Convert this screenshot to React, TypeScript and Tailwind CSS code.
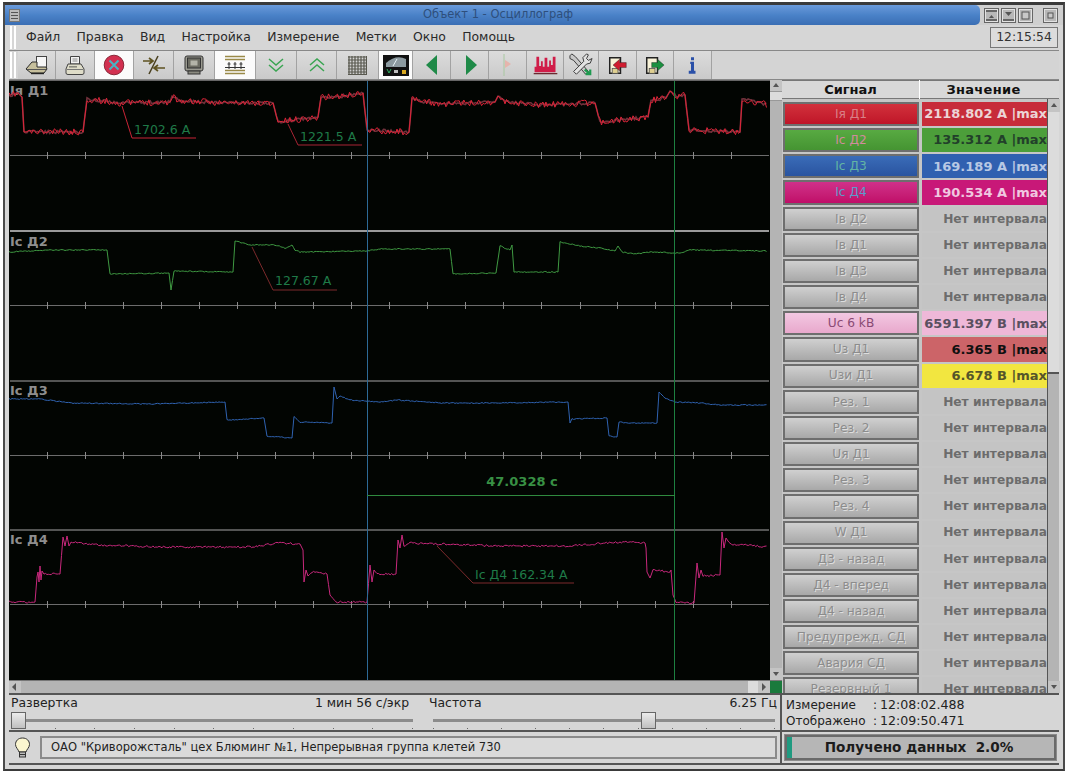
const sans = "font-['DejaVu_Sans',sans-serif]";

type Pt = [number, number];

/* =========================
   SIGNAL DATA
========================= */

const RED: Pt[] = [
  [9, 96], [18, 93], [22, 97], [24, 132], [83, 132], [87, 99], [120, 103], [170, 102], [172, 96], [180, 101], [230, 103],
  [273, 103], [278, 122], [318, 117], [321, 97], [345, 96], [363, 93], [367, 130], [409, 132], [412, 100], [440, 104],
  [495, 102], [498, 96], [505, 102], [540, 105], [595, 103], [600, 122], [648, 117], [651, 100], [666, 98], [670, 91],
  [676, 96], [685, 95], [689, 130], [740, 132], [742, 99], [768, 105],
];
const GREEN: Pt[] = [
  [9, 252], [50, 250], [107, 250], [110, 274], [169, 273], [171, 290], [174, 271], [233, 272], [235, 241], [250, 245],
  [275, 245], [285, 248], [292, 245], [295, 250], [300, 252], [366, 251], [380, 249], [450, 249], [453, 274], [496, 273],
  [500, 246], [510, 250], [512, 245], [514, 272], [558, 272], [560, 242], [580, 246], [600, 248], [615, 251], [618, 246],
  [622, 252], [635, 254], [650, 252], [680, 253], [690, 250], [768, 251],
];
const BLUE: Pt[] = [
  [9, 399], [40, 399], [70, 403], [150, 404], [225, 402], [227, 420], [264, 418], [267, 436], [292, 438], [294, 417],
  [300, 422], [332, 423], [334, 387], [337, 399], [340, 396], [350, 400], [366, 401], [380, 402], [397, 400], [440, 403],
  [500, 403], [568, 402], [570, 423], [572, 419], [607, 418], [609, 436], [617, 437], [619, 422], [630, 423], [657, 423],
  [659, 392], [665, 398], [675, 402], [700, 403], [720, 405], [768, 405],
];
const PINK: Pt[] = [
  [9, 602], [35, 602], [37, 577], [38, 572], [39, 582], [40, 566], [41, 580], [42, 571], [44, 574], [60, 574], [63, 537],
  [65, 546], [67, 536], [69, 546], [71, 542], [100, 545], [165, 547], [250, 547], [280, 543], [300, 544], [303, 550],
  [304, 582], [306, 570], [308, 576], [312, 572], [327, 574], [330, 595], [336, 602], [367, 602], [370, 565], [372, 582],
  [374, 570], [377, 574], [396, 574], [398, 540], [400, 548], [402, 535], [404, 546], [410, 543], [440, 544], [500, 546],
  [570, 546], [620, 542], [645, 543], [646, 548], [647, 572], [650, 578], [653, 570], [670, 572], [671, 570], [673, 595],
  [676, 602], [694, 603], [697, 563], [699, 578], [701, 570], [703, 576], [720, 575], [722, 532], [724, 548], [726, 538],
  [730, 544], [768, 547],
];

function makeTrace(pts: Pt[], amp: number, seed: number) {
  let s = seed;
  const rnd = () => {
    s = (s * 16807) % 2147483647;
    return s / 2147483647 - 0.5;
  };
  const out: string[] = [];
  for (let i = 0; i < pts.length - 1; i++) {
    const [x0, y0] = pts[i];
    const [x1, y1] = pts[i + 1];
    const n = Math.max(1, Math.round((x1 - x0) / 1.5));
    const flat = Math.abs(y1 - y0) / Math.max(1, x1 - x0) < 1;
    for (let k = 0; k < n; k++) {
      const t = k / n;
      const noise = flat ? rnd() * amp : 0;
      out.push(`${(x0 + (x1 - x0) * t).toFixed(1)},${(y0 + (y1 - y0) * t + noise).toFixed(1)}`);
    }
  }
  return out.join(" ");
}

const ticks = [47, 85, 123, 161, 199, 237, 275, 313, 351, 389, 427, 465, 503, 541, 580, 617, 655, 693, 731];

const signals = [
  { name: "Iя Д1", value: "2118.802 А |max", btn: "from-[#d2303c] to-[#bf1428] text-[#d98088]", cell: "bg-[#c72c3a] text-[#ecd4d6]" },
  { name: "Iс Д2", value: "135.312 А |max", btn: "from-[#58aa42] to-[#459432] text-[#cf8c9c]", cell: "bg-[#4c9e3a] text-[#22402a]" },
  { name: "Iс Д3", value: "169.189 А |max", btn: "from-[#3a6cb8] to-[#2a54a0] text-[#62b4a4]", cell: "bg-[#3060b0] text-[#b8c8e4]" },
  { name: "Iс Д4", value: "190.534 А |max", btn: "from-[#d0308a] to-[#c00c68] text-[#5c9ccc]", cell: "bg-[#c81878] text-[#f0c8e0]" },
  { name: "Iв Д2" },
  { name: "Iв Д1" },
  { name: "Iв Д3" },
  { name: "Iв Д4" },
  { name: "Uс 6 kВ", value: "6591.397 В |max", btn: "from-[#f2c8e2] to-[#e8a8cc] text-[#8a4a74]", cell: "bg-[#eeb8d8] text-[#5a5060]" },
  { name: "Uз Д1", value: "6.365 В |max", cell: "bg-[#cc6468] text-[#101010]" },
  { name: "Uзи Д1", value: "6.678 В |max", cell: "bg-[#f2e640] text-[#55552a]" },
  { name: "Рез. 1" },
  { name: "Рез. 2" },
  { name: "Uя Д1" },
  { name: "Рез. 3" },
  { name: "Рез. 4" },
  { name: "W Д1" },
  { name: "Д3 - назад" },
  { name: "Д4 - вперед" },
  { name: "Д4 - назад" },
  { name: "Предупрежд. СД" },
  { name: "Авария СД" },
  { name: "Резервный 1" },
];

const menu = ["Файл", "Правка", "Вид", "Настройка", "Измерение", "Метки", "Окно", "Помощь"];

export default function App() {
  return (
    <div className={`h-[776px] w-[1070px] overflow-hidden bg-white pl-[3px] pt-[2px] text-[12px] text-[#222] ${sans}`}>
      <div className="flex h-[769px] w-[1062px] flex-col border-x-2 border-t-[3px] border-b-2 border-x-[#4a4a4a] border-t-[#3a3a3a] border-b-[#3a3a3a] bg-[#d6d6d6]">
        <TitleBar />

        <div className="flex min-h-0 flex-1 flex-col px-[4px]">
          {/* Menu */}
          <div className="flex h-[25px] items-center">
            <Handle />
            <div className="ml-[8px] flex gap-[16.3px] text-[12.4px] text-[#2a2a2a]">
              {menu.map((m) => (
                <span key={m}>{m}</span>
              ))}
            </div>
            <div className="ml-auto mr-[1px] flex h-[21px] w-[68px] items-center justify-center border border-[#777] bg-[#dcdcdc] text-[12.4px] text-[#333]">
              12:15:54
            </div>
          </div>

          <Toolbar />

          {/* Plot + table */}
          <div className="flex h-[613px]">
            <div className="flex w-[773px] flex-col">
              <div className="flex h-[600px]">
                <Plot />
                <VScroll />
              </div>
              <HScroll />
            </div>
            <SignalTable />
          </div>

          {/* Sliders + times */}
          <div className="flex h-[37px] border-t-2 border-[#555]">
            <div className="flex w-[773px] gap-[14px] border-r-2 border-[#555] pl-[2px] pr-[2px]">
              <Slider label="Развертка" value="1 мин 56 с/экр" width="w-[404px]" valuePad="pr-[6px]" thumb="left-0" />
              <Slider label="Частота" value="6.25 Гц" width="w-[348px]" valuePad="pr-0" thumb="left-[212px]" />
            </div>
            <div className="flex flex-1 flex-col justify-center pl-[4px] leading-[16px] text-[#222]">
              <div className="flex">
                <span className="w-[87px]">Измерение</span>
                <span className="w-[7px]">:</span>
                <span className="text-[12.6px]">12:08:02.488</span>
              </div>
              <div className="flex">
                <span className="w-[87px]">Отображено</span>
                <span className="w-[7px]">:</span>
                <span className="text-[12.6px]">12:09:50.471</span>
              </div>
            </div>
          </div>

          {/* Status */}
          <div className="flex h-[35px] border-y-2 border-[#555]">
            <div className="flex w-[773px] items-center border-r-2 border-[#555] pl-[5px]">
              <Bulb />
              <div className="ml-[9px] flex h-[23px] w-[737px] items-center border-2 border-[#8a8a8a] bg-[#dadada] pl-[9px] text-[11.5px] text-[#222]">
                ОАО "Криворожсталь" цех Блюминг №1, Непрерывная группа клетей 730
              </div>
            </div>
            <div className="flex flex-1 items-center pl-[3px]">
              <div className="relative flex h-[25px] w-[271px] items-center justify-center border-2 border-[#6a6a6a] bg-[#b6b6b6] pr-[3px] text-[13.6px] font-bold text-[#1c1c1c] outline outline-[#8a8a8a]">
                <div className="absolute bottom-0 left-0 top-0 w-[5px] bg-[#1f9a80]" />
                <span className="whitespace-pre">Получено данных  2.0%</span>
              </div>
            </div>
          </div>
        </div>
      </div>
    </div>
  );
}

/* =========================
   TITLE BAR
========================= */

function TitleBar() {
  return (
    <div className="flex h-[20px] bg-[#cfcfcf]">
      <div className="flex w-[975px] items-center rounded-r-[5px] bg-linear-to-b from-[#6a9ada] via-[#4a82c8] to-[#3a6eb4] pl-[4px]">
        <div className="flex h-[13px] w-[11px] flex-col justify-center gap-[2px] border border-[#777] bg-[#bcbcbc] px-[1px]">
          <div className="h-px bg-[#555]" />
          <div className="h-px bg-[#555]" />
          <div className="h-px bg-[#555]" />
        </div>
        <span className="ml-[403px] text-[11.5px] text-[#2e4f7c]">Объект 1 - Осциллограф</span>
      </div>
      <div className="ml-[4px] flex items-center gap-[2px]">
        <WinBtn kind="up" />
        <WinBtn kind="down" />
        <WinBtn kind="box" />
      </div>
      <div className="ml-[10px] flex items-center">
        <WinBtn kind="close" />
      </div>
    </div>
  );
}

function WinBtn({ kind }: { kind: "up" | "down" | "box" | "close" }) {
  return (
    <svg width="15" height="15" viewBox="0 0 15 15">
      <rect x="0.5" y="0.5" width="14" height="14" fill="#b8b8b8" stroke="#666" />
      <rect x="1.5" y="1.5" width="12" height="12" fill="none" stroke="#e2e2e2" />
      {kind === "up" && (
        <>
          <rect x="2" y="2" width="11" height="2" fill="#666" />
          <path d="M5 10 L7.5 7 L10 10 Z" fill="#555" />
          <rect x="2" y="11" width="11" height="2" fill="#666" />
        </>
      )}
      {kind === "down" && (
        <>
          <path d="M4 4 H11 L7.5 8 Z" fill="#555" />
          <rect x="2" y="11" width="11" height="2" fill="#666" />
        </>
      )}
      {kind === "box" && <rect x="4" y="4" width="7" height="7" fill="#c8c8c8" stroke="#555" />}
      {kind === "close" && <rect x="5" y="5" width="5" height="5" fill="#c8c8c8" stroke="#555" />}
    </svg>
  );
}

function Handle() {
  return (
    <div className="flex h-full w-[9px] gap-[2px] py-[1px] pl-[1px]">
      <div className="w-[2px] border-x border-x-[#fff] bg-[#999]" />
      <div className="w-[2px] border-x border-x-[#fff] bg-[#999]" />
    </div>
  );
}

/* =========================
   TOOLBAR
========================= */

function ToolBtn({ w, on, children }: { w: string; on?: boolean; children: React.ReactNode }) {
  return (
    <div
      className={`flex h-full items-center justify-center border-r border-[#a2a2a2] ${w} ${
        on ? "bg-[#fbfbfb]" : "bg-linear-to-b from-[#dcdcdc] to-[#cacaca]"
      }`}
    >
      {children}
    </div>
  );
}

function Toolbar() {
  return (
    <div className="flex h-[30px] border-y border-[#888] bg-[#d4d4d4]">
      <Handle />
      <ToolBtn w="w-[38px]"><ScannerIcon /></ToolBtn>
      <ToolBtn w="w-[39px]"><PrinterIcon /></ToolBtn>
      <ToolBtn w="w-[39px]" on><StopIcon /></ToolBtn>
      <ToolBtn w="w-[40px]"><SwapIcon /></ToolBtn>
      <ToolBtn w="w-[41px]"><MonitorIcon /></ToolBtn>
      <ToolBtn w="w-[41px]" on><LinesIcon /></ToolBtn>
      <ToolBtn w="w-[41px]"><ChevronsIcon d="M1 1 L8 7 L15 1 M1 7 L8 13 L15 7" /></ToolBtn>
      <ToolBtn w="w-[40px]"><ChevronsIcon d="M1 7 L8 1 L15 7 M1 13 L8 7 L15 13" /></ToolBtn>
      <ToolBtn w="w-[42px]"><GridIcon /></ToolBtn>
      <ToolBtn w="w-[34px]" on><GaugeIcon /></ToolBtn>
      <ToolBtn w="w-[38px]"><TriIcon d="M13 3 L13 23 L2 13 Z" /></ToolBtn>
      <ToolBtn w="w-[38px]"><TriIcon d="M4 3 L15 13 L4 23 Z" /></ToolBtn>
      <ToolBtn w="w-[38px]"><FlagIcon /></ToolBtn>
      <ToolBtn w="w-[37px]"><BarsIcon /></ToolBtn>
      <ToolBtn w="w-[35px]"><ToolsIcon /></ToolBtn>
      <ToolBtn w="w-[38px]"><DocIcon arrow="#d01c30" dir="left" /></ToolBtn>
      <ToolBtn w="w-[37px]"><DocIcon arrow="#1c9040" dir="right" /></ToolBtn>
      <ToolBtn w="w-[38px]"><InfoIcon /></ToolBtn>
      <div className="flex-1" />
    </div>
  );
}

function ScannerIcon() {
  return (
    <svg width="23" height="20" viewBox="0 0 23 20">
      <rect x="11.5" y="1.5" width="10" height="11" fill="#f6f6f6" stroke="#444" />
      <path d="M7 7 H12 V12 H21 L22 14 L19 18 H6 L1 14 Z" fill="#c6bf9c" stroke="#2a2a2a" />
      <path d="M2 14.5 H21" stroke="#555" />
      <path d="M6 18.5 H19" stroke="#222" strokeWidth="1.4" />
    </svg>
  );
}

function PrinterIcon() {
  return (
    <svg width="20" height="21" viewBox="0 0 20 21">
      <path d="M5.5 1.5 H14.5 V9 H5.5 Z" fill="#f2f2f2" stroke="#444" />
      <path d="M7.5 4 H12.5 M7.5 6 H12.5" stroke="#888" />
      <path d="M3 9 H16 L19 14 V18 Q19 19.5 17 19.5 H3 Q1 19.5 1 18 V14 Z" fill="#dedcc8" stroke="#444" />
      <path d="M2 14.5 H18" stroke="#777" />
      <rect x="4" y="11" width="8" height="1.6" fill="#8a8a80" />
    </svg>
  );
}

function StopIcon() {
  return (
    <svg width="22" height="22" viewBox="0 0 22 22">
      <circle cx="11" cy="11" r="9.8" fill="#d23050" stroke="#8a2838" />
      <path d="M6.5 6.5 L15.5 15.5 M15.5 6.5 L6.5 15.5" stroke="#48b4c4" strokeWidth="2" />
    </svg>
  );
}

function SwapIcon() {
  return (
    <svg width="24" height="20" viewBox="0 0 24 20">
      <path d="M16 1 L7 19" stroke="#4a4020" strokeWidth="1.5" />
      <path d="M1 6 H10 M7 3 L11 6 L7 9" stroke="#5e5220" strokeWidth="1.7" fill="none" />
      <path d="M23 13 H13 M16 10 L12 13 L16 16" stroke="#5e5220" strokeWidth="1.7" fill="none" />
    </svg>
  );
}

function MonitorIcon() {
  return (
    <svg width="20" height="21" viewBox="0 0 20 21">
      <rect x="1" y="1" width="18" height="15" rx="2" fill="#9a9a90" stroke="#333" />
      <rect x="3.5" y="3" width="13" height="10" fill="#6c6c62" stroke="#333" />
      <rect x="6.5" y="5.5" width="7" height="5" fill="#b4b4a8" />
      <rect x="4" y="16" width="12" height="3" fill="#8a8a80" stroke="#333" />
    </svg>
  );
}

function LinesIcon() {
  return (
    <svg width="22" height="21" viewBox="0 0 22 21">
      <path d="M1 1.5 H21 M1 4.5 H21 M1 15.5 H21 M1 18.5 H21" stroke="#9a8a48" strokeWidth="1.3" />
      <path d="M1 12.5 H21" stroke="#333" />
      <path d="M5 7 V14 M11 7 V14 M17 7 V14 M3.5 9 H6.5 M9.5 9 H12.5 M15.5 9 H18.5" stroke="#333" />
    </svg>
  );
}

function ChevronsIcon({ d }: { d: string }) {
  return (
    <svg width="16" height="14" viewBox="0 0 16 14">
      <path d={d} fill="none" stroke="#3aa552" strokeWidth="1.5" />
    </svg>
  );
}

function GridIcon() {
  return (
    <svg width="19" height="19" viewBox="0 0 19 19">
      <path
        d="M1 0 V19 M4 0 V19 M7 0 V19 M10 0 V19 M13 0 V19 M16 0 V19 M18.5 0 V19 M0 1 H19 M0 4 H19 M0 7 H19 M0 10 H19 M0 13 H19 M0 16 H19 M0 18.5 H19"
        stroke="#58584e"
        strokeWidth="1.2"
      />
    </svg>
  );
}

function GaugeIcon() {
  return (
    <svg width="26" height="21" viewBox="0 0 26 21">
      <rect width="26" height="21" fill="#111" />
      <path d="M3 8 Q13 -1 23 4 V12 H3 Z" fill="#8c9aa0" />
      <path d="M10 11 L14 4" stroke="#e8f4f8" />
      <rect x="11" y="15" width="4" height="3" fill="#bbb" />
      <path d="M4 14 L6 18 L8 14" stroke="#2fb060" fill="none" />
      <rect x="19" y="15" width="4" height="4" fill="#d8a820" />
    </svg>
  );
}

function TriIcon({ d }: { d: string }) {
  return (
    <svg width="16" height="26" viewBox="0 0 16 26">
      <path d={d} fill="#1f8a48" />
    </svg>
  );
}

function FlagIcon() {
  return (
    <svg width="14" height="22" viewBox="0 0 14 22">
      <path d="M3 0 V22" stroke="#a8c8a0" strokeWidth="1" />
      <path d="M4 6 L10 10 L4 14 Z" fill="#e6b4ac" />
    </svg>
  );
}

function BarsIcon() {
  return (
    <svg width="25" height="20" viewBox="0 0 26 22">
      <path d="M1 19 V13 H3 V2 H6 V12 H8 V7 H10 V13 H12 V3 H15 V13 H17 V6 H19 V11 H21 V2 H24 V19 Z" fill="#d01c48" />
      <path d="M0 20.5 H26" stroke="#6a2a30" strokeWidth="1.4" />
    </svg>
  );
}

function ToolsIcon() {
  return (
    <svg width="26" height="24" viewBox="0 0 28 26">
      <path d="M2 3 L4 1 L8 4 L22 20 L19 23 L6 8 L2 6 Z" fill="#c8c8c8" stroke="#333" />
      <path d="M20 1 L16 5 L17 9 L6 20 L9 23 L20 12 L24 11 L26 6 L22 8 L20 6 L22 2 Z" fill="#e2e2e2" stroke="#333" />
      <path d="M18 18 L24 23 M24 18 V23 H19" stroke="#1f9a50" strokeWidth="2.4" fill="none" />
    </svg>
  );
}

function DocIcon({ arrow, dir }: { arrow: string; dir: "left" | "right" }) {
  return (
    <svg width="20" height="19" viewBox="0 0 24 23">
      <path d="M2 2 H15 V21 H2 Z" fill="#f8f2d8" stroke="#222" strokeWidth="1.8" />
      <rect x="5" y="15" width="7" height="6" fill="#e0d090" stroke="#555" />
      {dir === "left" ? (
        <path d="M6 11 L14 4 V8 H22 V14 H14 V18 Z" fill={arrow} stroke="#222" strokeWidth="0.5" />
      ) : (
        <path d="M23 11 L15 4 V8 H8 V14 H15 V18 Z" fill={arrow} stroke="#222" strokeWidth="0.5" />
      )}
    </svg>
  );
}

function InfoIcon() {
  return (
    <svg width="9" height="19" viewBox="0 0 12 24">
      <rect x="4" y="1" width="4" height="4" fill="#2a50a8" />
      <path d="M3 7 H8 V19 H10 V23 H1 V19 H4 V10 H3 Z" fill="#2a50a8" />
    </svg>
  );
}

function Bulb() {
  return (
    <svg width="17" height="22" viewBox="0 0 17 22">
      <path
        d="M8.5 1 C4 1 1.5 4 1.5 7.5 C1.5 10.5 4.5 12.5 5 15 H12 C12.5 12.5 15.5 10.5 15.5 7.5 C15.5 4 13 1 8.5 1 Z"
        fill="#fbf6d0"
        stroke="#333"
      />
      <rect x="5.5" y="15" width="6" height="5" fill="#bbb" stroke="#333" />
      <path d="M6 17.5 H11" stroke="#333" />
    </svg>
  );
}

/* =========================
   PLOT
========================= */

function Plot() {
  return (
    <div className="w-[761px] border-t border-[#666] bg-[#020502]">
      <svg width="761" height="599" viewBox="9 81 761 599" className={`block ${sans}`}>
        {[155, 305, 455, 604].map((y) => (
          <g key={y} stroke="#6c6c6c">
            <path d={`M10 ${y}.5 H769`} />
            {ticks.map((x) => (
              <path key={x} d={`M${x}.5 ${y - 3} V${y + 4}`} stroke="#8a8a8a" />
            ))}
          </g>
        ))}
        <path d="M10 231 H769" stroke="#9a9a9a" strokeWidth="2" />
        <path d="M10 381 H769" stroke="#707070" strokeWidth="1.4" />
        <path d="M10 530 H769" stroke="#707070" strokeWidth="1.4" />

        <g fontSize="13" fontWeight="700" fill="#8e8e8e">
          <text x="10" y="95">Iя Д1</text>
          <text x="10" y="246">Iс Д2</text>
          <text x="10" y="395">Iс Д3</text>
          <text x="10" y="544">Iс Д4</text>
        </g>

        <polyline points={makeTrace(RED, 3, 29)} fill="none" stroke="#70303a" strokeWidth="1.6" />
        <polyline points={makeTrace(RED, 6.5, 11)} fill="none" stroke="#dc2438" strokeWidth="1" />
        <polyline points={makeTrace(GREEN, 1, 37)} fill="none" stroke="#3f9a42" strokeWidth="1" />
        <polyline points={makeTrace(BLUE, 1, 53)} fill="none" stroke="#2f62b0" strokeWidth="1" />
        <polyline points={makeTrace(PINK, 2, 71)} fill="none" stroke="#c8287c" strokeWidth="1" />

        <path d="M367.5 81 V680" stroke="#2d6a96" />
        <path d="M674.5 81 V680" stroke="#1d8040" />
        <path d="M367 495.5 H675" stroke="#2f8a3e" />
        <text x="522" y="486" textAnchor="middle" fontSize="13" fontWeight="700" fill="#389044">47.0328 с</text>

        <path d="M122 106 L132 138 H196" fill="none" stroke="#c92436" />
        <path d="M288 124 L298 145 H362" fill="none" stroke="#a82434" />
        <path d="M252 247 L273 290 H337" fill="none" stroke="#7c2a2c" />
        <path d="M437 546 L473 583 H574" fill="none" stroke="#7c2a2c" />
        <g fontSize="12.5" fill="#1f7a48">
          <text x="134" y="134">1702.6 А</text>
          <text x="300" y="141">1221.5 А</text>
          <text x="275" y="285">127.67 А</text>
          <text x="475" y="579">Iс Д4 162.34 А</text>
        </g>
      </svg>
    </div>
  );
}

function ArrowBtn({ dir, h }: { dir: "up" | "down" | "left" | "right"; h: string }) {
  const d = {
    up: "M3 7 L6 3 L9 7 Z",
    down: "M3 4 L6 8 L9 4 Z",
    left: "M7 2 L3 6 L7 10 Z",
    right: "M4 2 L8 6 L4 10 Z",
  }[dir];
  return (
    <div className={`flex w-[12px] shrink-0 items-center justify-center bg-[#c4c4c4] ${h}`}>
      <svg width="12" height="12" viewBox="0 0 12 12">
        <path d={d} fill="#555" />
      </svg>
    </div>
  );
}

function VScroll() {
  return (
    <div className="flex w-[12px] flex-col bg-[#b4b4b4]">
      <ArrowBtn dir="up" h="h-[11px]" />
      <div className="h-[10px] border-y border-[#999] bg-[#dcdcdc]" />
      <div className="flex-1" />
      <ArrowBtn dir="down" h="h-[12px]" />
    </div>
  );
}

function HScroll() {
  return (
    <div className="flex h-[13px] border-t border-[#777] bg-[#b4b4b4]">
      <ArrowBtn dir="left" h="h-full" />
      <div className="flex-1" />
      <div className="w-[10px] bg-[#dcdcdc]" />
      <ArrowBtn dir="right" h="h-full" />
      <div className="w-[12px] bg-[#1a7a3c]" />
    </div>
  );
}

/* =========================
   SIGNAL TABLE
========================= */

function SignalTable() {
  return (
    <div className="flex w-[277px] flex-col">
      <div className="flex h-[19px] items-center border-y border-[#777] bg-[#d8d8d8] text-[13px] font-bold text-[#111]">
        <div className="w-[138px] border-r border-white text-center">Сигнал</div>
        <div className="flex-1 pr-[12px] text-center tracking-[0.3px]">Значение</div>
      </div>
      <div className="flex h-[594px] min-h-0 bg-[#c6c6c6]">
        <div className="flex w-[265px] flex-col overflow-hidden pl-[1px] pt-[3px]">
          {signals.map((s) => (
            <div key={s.name} className="flex h-[26.17px] shrink-0 gap-[3px] pb-[2px]">
              <div
                className={`flex w-[136px] items-center justify-center border-2 border-[#6e6e6e] bg-linear-to-b text-[12.2px] ${
                  s.btn ?? "from-[#d0d0d0] to-[#a8a8a8] text-[#8c8c8c] [text-shadow:1px_1px_0_#dedede]"
                }`}
              >
                {s.name}
              </div>
              <div
                className={`flex flex-1 items-center justify-end overflow-hidden whitespace-nowrap font-bold ${
                  s.value ? "text-[13px]" : "text-[12.2px]"
                } ${s.cell ?? "bg-[#c4c4c4] text-[#6c6c6c]"}`}
              >
                {s.value ?? "Нет интервала"}
              </div>
            </div>
          ))}
        </div>
        <div className="flex w-[12px] flex-col border-l border-[#555] bg-[#b4b4b4]">
          <ArrowBtn dir="up" h="h-[13px]" />
          <div className="h-[262px] border-b-2 border-[#555] bg-[#dcdcdc]" />
          <div className="flex-1" />
          <ArrowBtn dir="down" h="h-[12px]" />
        </div>
      </div>
    </div>
  );
}

/* =========================
   SLIDER
========================= */

function Slider({
  label,
  value,
  width,
  valuePad,
  thumb,
}: {
  label: string;
  value: string;
  width: string;
  valuePad: string;
  thumb: string;
}) {
  return (
    <div className={`flex flex-col ${width}`}>
      <div className="flex h-[17px] items-center justify-between text-[12.4px] leading-none text-[#222]">
        <span>{label}</span>
        <span className={valuePad}>{value}</span>
      </div>
      <div className="relative flex-1">
        <div className="absolute left-[4px] right-[2px] top-[7px] h-[3px] bg-[#8c8c8c]" />
        <div className="absolute bottom-[1px] left-[4px] right-[2px] flex justify-between">
          {Array.from({ length: 11 }).map((_, i) => (
            <div key={i} className="h-px w-px bg-[#666]" />
          ))}
        </div>
        <div className={`absolute top-0 h-[17px] w-[15px] border border-[#666] bg-linear-to-b from-[#ececec] to-[#c0c0c0] ${thumb}`} />
      </div>
    </div>
  );
}
